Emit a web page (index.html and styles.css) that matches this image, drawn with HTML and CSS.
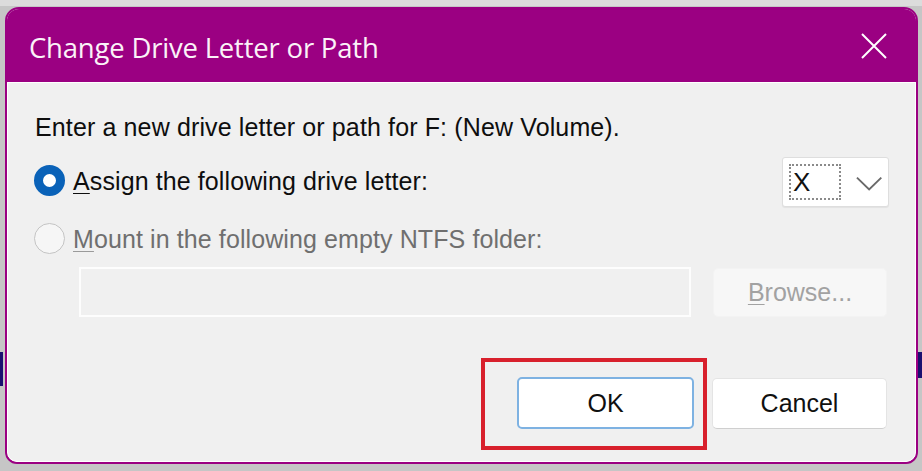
FILE: index.html
```html
<!DOCTYPE html>
<html lang="en">
<head>
<meta charset="utf-8">
<title>Change Drive Letter or Path</title>
<link rel="stylesheet" href="styles.css">
</head>
<body>
<div class="screen">
  <div class="edge edge-left"></div>
  <div class="edge edge-right"></div>
  <div class="dialog">
    <div class="titlebar">
      <span class="title">Change Drive Letter or Path</span>
      <svg class="close" width="26" height="26" viewBox="0 0 26 26"><path d="M1 1 L25 25 M25 1 L1 25" stroke="#fff" stroke-width="2" fill="none"/></svg>
    </div>
    <div class="content">
      <p class="desc">Enter a new drive letter or path for F: (New Volume).</p>
      <div class="row row-assign">
        <div class="radio"><span class="dot dot-on"></span><span class="label"><u>A</u>ssign the following drive letter:</span></div>
        <div class="combo">
          <span class="combo-value">X</span>
          <svg class="chevron" width="27" height="15" viewBox="0 0 27 15"><path d="M1 1.5 L13.5 13.5 L26 1.5" stroke="#6a6a6a" stroke-width="2" fill="none"/></svg>
        </div>
      </div>
      <div class="row row-mount">
        <div class="radio radio-disabled"><span class="dot"></span><span class="label"><u>M</u>ount in the following empty NTFS folder:</span></div>
      </div>
      <div class="row row-folder">
        <div class="textbox"></div>
        <div class="btn btn-browse"><u>B</u>rowse...</div>
      </div>
      <div class="row row-actions">
        <div class="ok-wrap">
          <div class="btn btn-ok">OK</div>
          <span class="highlight"></span>
        </div>
        <div class="btn btn-cancel">Cancel</div>
      </div>
    </div>
  </div>
</div>
</body>
</html>
```

FILE: styles.css
```css
* { box-sizing: border-box; }
html, body { margin: 0; padding: 0; }
body {
  width: 922px;
  height: 471px;
  overflow: hidden;
  background: #c9c9c9;
  font-family: "Liberation Sans", Arial, sans-serif;
}
.screen {
  position: relative;
  width: 922px;
  height: 471px;
  padding: 7px 4px 7px 5px;
  background: linear-gradient(#dcdcdc, #dcdcdc) 0 0 / 100% 6px no-repeat, #c6c6c6;
}
.edge { position: absolute; background: #1a1070; }
.edge-left { left: 0; top: 352px; width: 3px; height: 34px; }
.edge-right { right: 0; top: 352px; width: 4px; height: 26px; }
.dialog {
  position: relative;
  width: 913px;
  height: 457px;
  display: flex;
  flex-direction: column;
  border: 2px solid #9b0082;
  border-radius: 14px 14px 12px 12px;
  overflow: hidden;
  background: #f0f0f0;
}
.titlebar {
  height: 73px;
  flex: none;
  background: #9b0082;
  display: flex;
  align-items: center;
  justify-content: space-between;
  padding: 3px 29px 0 22px;
}
.title {
  color: #fbf2f8;
  font-family: "Open Sans", "Noto Sans", sans-serif;
  font-size: 27.5px;
  letter-spacing: -0.2px;
}
.close { display: block; margin-top: -2px; }
.content {
  flex: 1;
  border: 1px solid #ffffff;
  border-radius: 0 0 10px 10px;
  background: #f0f0f0;
  padding: 30px 26px 0 26px;
  font-size: 25px;
  color: #0e0e0e;
}
.desc {
  margin: 0;
  padding-left: 1px;
  line-height: 28px;
  height: 28px;
  letter-spacing: 0.13px;
}
.row { display: flex; align-items: center; }
.row-assign { margin-top: 16px; height: 50px; justify-content: space-between; }
.row-mount { margin-top: 18px; height: 30px; }
.row-folder { margin-top: 12px; height: 50px; }
.row-actions { margin-top: 60px; height: 52px; justify-content: flex-end; gap: 18px; padding-right: 2px; }
.radio { display: flex; align-items: center; gap: 8px; margin-top: -3px; }
.label { line-height: 30px; letter-spacing: 0.1px; }
.label u { text-underline-offset: 3px; text-decoration-thickness: 1px; }
.dot {
  width: 31px;
  height: 31px;
  border-radius: 50%;
  border: 1.5px solid #c4c4c4;
  background: #f6f6f6;
  flex: none;
}
.dot-on {
  border: 9.5px solid #0a62b8;
  background: #ffffff;
}
.radio-disabled .label { color: #6f6f6f; }
.radio-disabled .label u { text-decoration-color: #9a9a9a; }
.combo {
  width: 107px;
  height: 50px;
  background: #ffffff;
  border: 1px solid #dedede;
  border-radius: 3px;
  box-shadow: 0 1px 1px rgba(0,0,0,0.06);
  display: flex;
  align-items: center;
  padding: 0 6px;
  margin-right: 0;
}
.combo-value {
  width: 53px;
  height: 36px;
  border: 2px dotted #8a8a8a;
  font-size: 26px;
  line-height: 32px;
  padding-left: 2px;
  color: #111;
}
.chevron { margin-left: 15px; margin-top: 2px; }
.textbox {
  margin-left: 45px;
  width: 612px;
  height: 50px;
  border: 2px solid #fdfdfd;
  background: #f0f0f0;
}
.btn {
  display: flex;
  align-items: center;
  justify-content: center;
  border-radius: 5px;
  font-size: 25px;
}
.btn u { text-underline-offset: 3px; text-decoration-thickness: 1px; }
.btn-browse {
  margin-left: 22px;
  width: 174px;
  height: 49px;
  margin-top: 1px;
  background: #f7f7f7;
  border: 1px solid #f3f3f3;
  color: #a2a2a2;
}
.ok-wrap { position: relative; }
.btn-ok {
  width: 177px;
  height: 52px;
  background: #ffffff;
  border: 2px solid #7eb2e2;
  color: #101010;
}
.btn-cancel {
  width: 175px;
  height: 51px;
  background: #ffffff;
  border: 1px solid #e4e4e4;
  border-bottom-color: #cfcfcf;
  color: #101010;
}
.highlight {
  position: absolute;
  left: -36px;
  top: -19px;
  width: 226px;
  height: 92px;
  border: 4px solid #d8202c;
}
```
